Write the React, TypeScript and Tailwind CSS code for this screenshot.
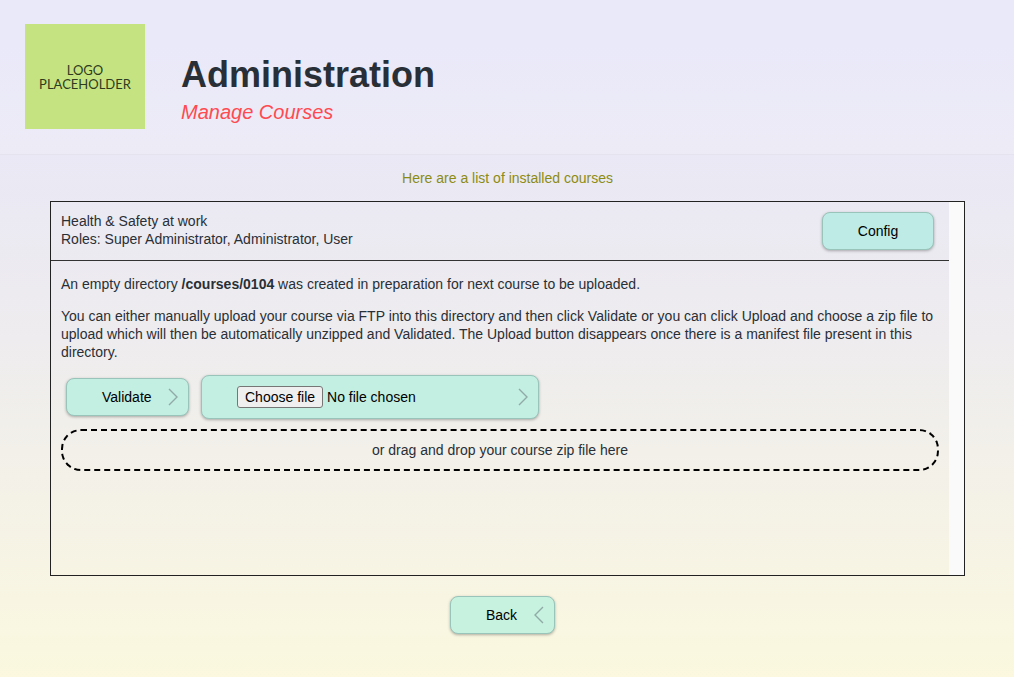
import { useState } from 'react';
import type { ReactNode } from 'react';

const buttonBase =
  'relative flex items-center rounded-lg border border-[#98c4ba] text-black shadow-[0_1px_3px_rgba(0,0,0,0.3)]';

function Chevron({ direction = 'right' }: { direction?: 'left' | 'right' }) {
  return (
    <svg width="10" height="18" viewBox="0 0 10 18" fill="none" stroke="#91aaa6" strokeWidth="1.4" aria-hidden="true">
      <path d={direction === 'right' ? 'M1 1l8 8-8 8' : 'M9 1L1 9l8 8'} />
    </svg>
  );
}

function Section({ children }: { children: ReactNode }) {
  return <section className="px-[10px] pt-[14px]">{children}</section>;
}

export default function App() {
  const [fileName, setFileName] = useState('No file chosen');

  return (
    <div className="min-h-screen bg-linear-to-b from-[#e6e5fa] via-[#eeecee] to-[#fbf8df] font-['Liberation_Sans',Arial,sans-serif] text-[14px] leading-[18px] text-[#292f36]">
      <header className="flex h-[155px] items-start gap-9 border-b border-[#e4e3ee] bg-white/15 px-[25px] pt-6">
        <div className="flex h-[105px] w-[120px] shrink-0 items-center justify-center bg-[#c5e481] text-center font-['Lato',sans-serif] text-[13px] leading-[14px] text-[#2f3b20]">
          LOGO
          <br />
          PLACEHOLDER
        </div>
        <div className="pt-[29px]">
          <h1 className="text-[36px] leading-[44px] font-bold">Administration</h1>
          <p className="text-[20px] leading-[30px] text-[#ff4a4f] italic">Manage Courses</p>
        </div>
      </header>

      <main className="flex flex-col items-center pr-[49px] pb-10 pl-[50px]">
        <p className="pt-[14px] pb-[14px] text-[#8c8c12]">Here are a list of installed courses</p>

        <div className="flex min-h-[375px] w-full border border-[#222]">
          <div className="min-w-0 flex-1">
            <div className="flex items-start justify-between border-b border-[#333] px-[10px] py-[10px]">
              <div>
                <p>Health &amp; Safety at work</p>
                <p>Roles: Super Administrator, Administrator, User</p>
              </div>
              <button type="button" className={`${buttonBase} mr-[5px] h-[38px] w-[112px] justify-center bg-[#beebe5]`}>
                Config
              </button>
            </div>

            <Section>
              <p>
                An empty directory <strong>/courses/0104</strong> was created in preparation for next course to be
                uploaded.
              </p>
              <p className="mt-[14px]">
                You can either manually upload your course via FTP into this directory and then click Validate or you
                can click Upload and choose a zip file to upload which will then be automatically unzipped and
                Validated. The Upload button disappears once there is a manifest file present in this directory.
              </p>
              <div className="mt-[14px] flex flex-wrap items-center gap-3 pl-[5px]">
                <button type="button" className={`${buttonBase} h-[38px] w-[123px] justify-between bg-[#c3eee2] pr-[10px] pl-[35px]`}>
                  Validate
                  <Chevron />
                </button>
                <label className={`${buttonBase} h-[44px] w-[338px] cursor-pointer justify-between bg-[#c3eee2] pr-[10px] pl-[35px]`}>
                  <input
                    type="file"
                    accept=".zip"
                    className="sr-only"
                    onChange={(e) => setFileName(e.target.files?.[0]?.name ?? 'No file chosen')}
                  />
                  <span className="flex items-center gap-1">
                    <span className="rounded-[3px] border border-[#767676] bg-[#efefef] px-[7px] py-px">
                      Choose file
                    </span>
                    <span>{fileName}</span>
                  </span>
                  <Chevron />
                </label>
              </div>
              <div className="mt-[10px] flex h-[42px] items-center justify-center rounded-[20px] border-2 border-dashed border-black">
                or drag and drop your course zip file here
              </div>
            </Section>
          </div>
          <div className="w-[15px] shrink-0 bg-[#fafafa]" />
        </div>

        <button type="button" className={`${buttonBase} mt-5 mr-[10px] h-[38px] w-[105px] justify-between bg-[#c7f2e0] pr-[10px] pl-[35px]`}>
          Back
          <Chevron direction="left" />
        </button>
      </main>
    </div>
  );
}
